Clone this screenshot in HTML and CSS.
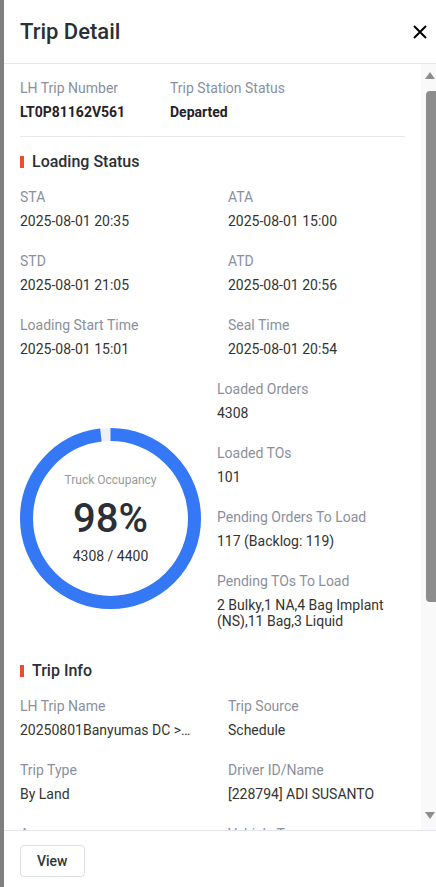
FILE: index.html
```html
<!DOCTYPE html>
<html lang="en">
<head>
  <meta charset="UTF-8" />
  <meta name="viewport" content="width=device-width, initial-scale=1.0"/>
  <title>Trip Detail</title>
  <link rel="stylesheet" href="styles.css">
</head>
<body>
  <div class="backdrop"></div>

  <aside class="drawer">
    <header class="drawer-header">
      <h1>Trip Detail</h1>
      <button class="close-btn" aria-label="Close">
        <svg width="14" height="14" viewBox="0 0 14 14">
          <path d="M1 1 L13 13 M13 1 L1 13" stroke="#000" stroke-width="2" fill="none"/>
        </svg>
      </button>
    </header>

    <div class="drawer-main">
      <div class="drawer-body">
        <div class="summary">
          <div class="field summary-first">
            <div class="label">LH Trip Number</div>
            <div class="value strong">LT0P81162V561</div>
          </div>
          <div class="field">
            <div class="label">Trip Station Status</div>
            <div class="value strong">Departed</div>
          </div>
        </div>

        <!-- Loading Status -->
        <section class="section">
          <h2 class="section-title">Loading Status</h2>
          <div class="field-grid">
            <div class="field"><div class="label">STA</div><div class="value">2025-08-01 20:35</div></div>
            <div class="field"><div class="label">ATA</div><div class="value">2025-08-01 15:00</div></div>
            <div class="field"><div class="label">STD</div><div class="value">2025-08-01 21:05</div></div>
            <div class="field"><div class="label">ATD</div><div class="value">2025-08-01 20:56</div></div>
            <div class="field"><div class="label">Loading Start Time</div><div class="value">2025-08-01 15:01</div></div>
            <div class="field"><div class="label">Seal Time</div><div class="value">2025-08-01 20:54</div></div>
          </div>

          <div class="occupancy">
            <div class="donut">
              <svg width="181" height="181" viewBox="0 0 181 181">
                <circle cx="90.5" cy="90.5" r="84" fill="none" stroke="#eef0f4" stroke-width="13"/>
                <circle cx="90.5" cy="90.5" r="84" fill="none" stroke="#3478f6" stroke-width="13"
                        stroke-dasharray="517.2 527.8" transform="rotate(-90 90.5 90.5)"/>
              </svg>
              <div class="donut-text">
                <div class="donut-label">Truck Occupancy</div>
                <div class="donut-percent">98%</div>
                <div class="donut-count">4308 / 4400</div>
              </div>
            </div>

            <div class="occupancy-list">
              <div class="field"><div class="label">Loaded Orders</div><div class="value">4308</div></div>
              <div class="field"><div class="label">Loaded TOs</div><div class="value">101</div></div>
              <div class="field"><div class="label">Pending Orders To Load</div><div class="value">117 (Backlog: 119)</div></div>
              <div class="field"><div class="label">Pending TOs To Load</div><div class="value">2 Bulky,1 NA,4 Bag Implant (NS),11 Bag,3 Liquid</div></div>
            </div>
          </div>
        </section>

        <!-- Trip Info -->
        <section class="section section-next">
          <h2 class="section-title">Trip Info</h2>
          <div class="field-grid">
            <div class="field"><div class="label">LH Trip Name</div><div class="value ellipsis">20250801Banyumas DC &gt; Purwokerto Hub</div></div>
            <div class="field"><div class="label">Trip Source</div><div class="value">Schedule</div></div>
            <div class="field"><div class="label">Trip Type</div><div class="value">By Land</div></div>
            <div class="field"><div class="label">Driver ID/Name</div><div class="value">[228794] ADI SUSANTO</div></div>
            <div class="field"><div class="label">Agency</div><div class="value">PT Logistik Nusantara</div></div>
            <div class="field"><div class="label">Vehicle Type</div><div class="value">CDD Long</div></div>
          </div>
        </section>
      </div>

      <!-- scrollbar -->
      <div class="scrollbar">
        <div class="scroll-btn scroll-up"><span class="arrow-up"></span></div>
        <div class="scroll-track"><div class="scroll-thumb"></div></div>
        <div class="scroll-btn scroll-down"><span class="arrow-down"></span></div>
      </div>
    </div>

    <footer class="drawer-footer">
      <button class="btn">View</button>
    </footer>
  </aside>
</body>
</html>
```

FILE: styles.css
```css
/* ---------- base ---------- */
* {
  margin: 0;
  padding: 0;
  box-sizing: border-box;
}
html, body {
  height: 100%;
  overflow: hidden;
}
body {
  display: flex;
  font-family: Roboto, "Liberation Sans", sans-serif;
  font-size: 14px;
  color: #333;
  background: #7f7f7f;
}
.backdrop {
  width: 4px;
  flex-shrink: 0;
  background: #7f7f7f;
}

/* ---------- drawer ---------- */
.drawer {
  flex: 1;
  display: flex;
  flex-direction: column;
  background: #fff;
  min-width: 0;
}
.drawer-header {
  height: 64px;
  flex-shrink: 0;
  display: flex;
  align-items: center;
  justify-content: space-between;
  padding: 0 8px 0 16px;
  border-bottom: 1px solid #e5e6eb;
}
.drawer-header h1 {
  font-size: 22px;
  font-weight: 500;
  color: #2b2f36;
  line-height: 28px;
}
.close-btn {
  width: 16px;
  height: 16px;
  border: none;
  background: none;
  display: flex;
  align-items: center;
  justify-content: center;
  cursor: pointer;
}

.drawer-main {
  flex: 1;
  min-height: 0;
  display: flex;
}
.drawer-body {
  flex: 1;
  min-width: 0;
  overflow: hidden;
  padding: 16px;
}

/* ---------- scrollbar ---------- */
.scrollbar {
  width: 15px;
  flex-shrink: 0;
  display: flex;
  flex-direction: column;
  background: #f9f9f9;
}
.scroll-btn {
  height: 27px;
  flex-shrink: 0;
  padding-left: 4px;
}
.scroll-up {
  padding-top: 8px;
}
.scroll-down {
  padding-top: 9px;
}
.arrow-up,
.arrow-down {
  display: block;
  width: 0;
  height: 0;
  border-left: 5.5px solid transparent;
  border-right: 5.5px solid transparent;
}
.arrow-up {
  border-bottom: 7px solid #8d8d8d;
}
.arrow-down {
  border-top: 7px solid #8d8d8d;
}
.scroll-track {
  flex: 1;
  padding-left: 5px;
}
.scroll-thumb {
  height: 511px;
  background: #8d8d8d;
  border-radius: 4px 0 0 4px;
}

/* ---------- footer ---------- */
.drawer-footer {
  height: 57px;
  flex-shrink: 0;
  border-top: 1px solid #e5e6eb;
  padding: 14px 16px;
}
.btn {
  height: 32px;
  padding: 0 16px;
  border: 1px solid #dcdfe6;
  border-radius: 4px;
  background: #fff;
  font-family: inherit;
  font-size: 14px;
  font-weight: 500;
  color: #333;
  cursor: pointer;
}

/* ---------- fields ---------- */
.label {
  font-size: 14px;
  line-height: 16px;
  color: #8a909c;
  margin-bottom: 8px;
}
.value {
  font-size: 14px;
  line-height: 16px;
  color: #333;
}
.value.strong {
  font-weight: 700;
  color: #1f2329;
}
.ellipsis {
  white-space: nowrap;
  overflow: hidden;
  text-overflow: ellipsis;
}

.summary {
  display: flex;
  padding-bottom: 16px;
  border-bottom: 1px solid #e8e9ed;
}
.summary-first {
  width: 150px;
}

.section-title {
  display: flex;
  align-items: center;
  gap: 8px;
  margin: 13px 0 15px;
  font-size: 16px;
  font-weight: 500;
  line-height: 24px;
  color: #2b2f36;
}
.section-title::before {
  content: '';
  width: 4px;
  height: 12px;
  background: #ee4d2d;
}
.section-next {
  margin-top: 30px;
}

.field-grid {
  display: grid;
  grid-template-columns: 172px 1fr;
  column-gap: 36px;
  row-gap: 24px;
}

/* ---------- occupancy ---------- */
.occupancy {
  display: flex;
  gap: 16px;
  margin-top: 24px;
}
.donut {
  width: 181px;
  height: 181px;
  flex-shrink: 0;
  margin-top: 47px;
  display: grid;
}
.donut svg,
.donut-text {
  grid-area: 1 / 1;
}
.donut-text {
  display: flex;
  flex-direction: column;
  align-items: center;
  justify-content: center;
}
.donut-label {
  font-size: 12px;
  line-height: 16px;
  color: #999;
  margin-bottom: 7px;
}
.donut-percent {
  font-size: 40px;
  font-weight: 500;
  line-height: 48px;
  color: #2b2f36;
  margin-bottom: 3px;
}
.donut-count {
  font-size: 14px;
  line-height: 20px;
  color: #333;
}
.occupancy-list {
  flex: 1;
  display: flex;
  flex-direction: column;
  gap: 24px;
}
```
